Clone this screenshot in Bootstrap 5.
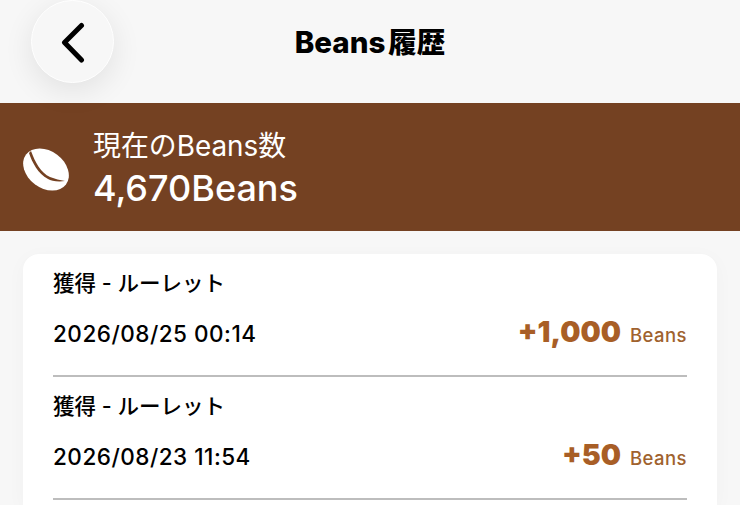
<!DOCTYPE html>
<html lang="ja"><head><meta charset="utf-8">
<link href="https://cdn.jsdelivr.net/npm/bootstrap@5.3.0/dist/css/bootstrap.min.css" rel="stylesheet">
<style>
html,body{height:505px;overflow:hidden}
body{background:#f7f7f7;font-family:Inter,"Noto Sans CJK JP",sans-serif;color:#000}
.topbar{height:103px;padding:0 31px}
.backbtn{width:83px;height:83px;border:1px solid #fff;border-radius:50%;background:#f7f7f7;box-shadow:0 8px 30px rgba(0,0,0,.09);flex:none;padding:0}
.pagetitle{font-size:29.5px;font-weight:800;margin:0;line-height:1}
.titlekanji{font-size:28.5px;margin-left:3px}
.titlewrap{left:0;right:0;top:0;height:85px}
.beanband{height:128px;background:#744122;color:#fff;padding:5px 23px 0;gap:24px}
.beanlabel{font-size:27.9px;line-height:37px;font-weight:400}
.beanvalue{font-size:36px;line-height:47px;font-weight:500}
.histcard{height:251px;margin:23px 23px 0;background:#fff;border-radius:16px 16px 0 0;padding:0 30px;box-shadow:0 4px 20px rgba(0,0,0,.03)}
.histrow{height:123px;border-bottom:2px solid #bdbdbd;padding-top:15px}
.histtype{font-size:21.5px;line-height:28px;font-weight:500}
.histline{margin-top:21px}
.histdate{font-size:22.5px;line-height:28px;font-weight:500;letter-spacing:.5px}
.histamount{font-size:28.5px;line-height:28px;font-weight:900;color:#a85e26}
.histunit{font-size:18.5px;font-weight:500;color:#a0622e;margin-left:9px;letter-spacing:.45px}
</style></head><body>
<header class="topbar position-relative d-flex align-items-start">
<button class="backbtn d-flex align-items-center justify-content-center" aria-label="戻る"><svg width="28" height="42" viewBox="0 0 28 42"><path d="M22.5 4.5 5.5 21.5l17 17.5" fill="none" stroke="#000" stroke-width="5" stroke-linecap="round" stroke-linejoin="round"/></svg></button>
<div class="titlewrap position-absolute d-flex align-items-center justify-content-center"><h1 class="pagetitle">Beans<span class="titlekanji">履歴</span></h1></div>
</header>
<section class="beanband d-flex align-items-center">
<svg width="46" height="44" viewBox="0 0 46 44"><ellipse cx="23" cy="21.5" rx="25" ry="18.5" fill="#fff" transform="rotate(37 23 21.5)"/><path d="M8 3C12 14 18 25 27 29 32 31 37 32 42 33 35 34 28 33 25 31 15 26 9 14 6 5Z" fill="#744122"/></svg>
<div><div class="beanlabel">現在のBeans数</div><div class="beanvalue">4,670Beans</div></div>
</section>
<main class="histcard">
<div class="histrow"><div class="histtype">獲得 - ルーレット</div><div class="histline d-flex justify-content-between align-items-baseline"><span class="histdate">2026/08/25 00:14</span><span class="histamount">+1,000<span class="histunit">Beans</span></span></div></div>
<div class="histrow"><div class="histtype">獲得 - ルーレット</div><div class="histline d-flex justify-content-between align-items-baseline"><span class="histdate">2026/08/23 11:54</span><span class="histamount">+50<span class="histunit">Beans</span></span></div></div>
</main>
</body></html>
